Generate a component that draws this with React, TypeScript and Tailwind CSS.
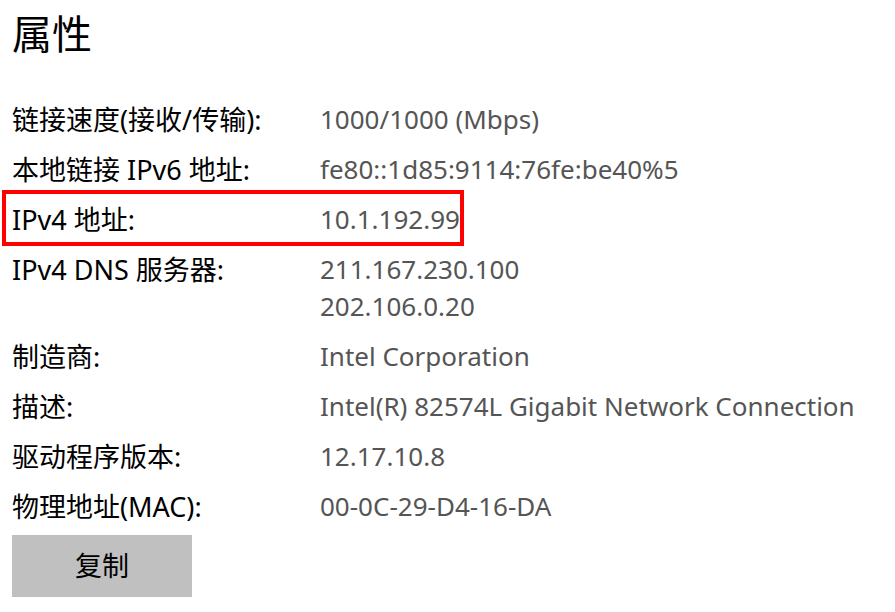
import React from 'react';

interface Prop {
  label: string;
  values: string[];
  marked?: boolean;
}

const props: Prop[] = [
  { label: '链接速度(接收/传输):', values: ['1000/1000 (Mbps)'] },
  { label: '本地链接 IPv6 地址:', values: ['fe80::1d85:9114:76fe:be40%5'] },
  { label: 'IPv4 地址:', values: ['10.1.192.99'], marked: true },
  { label: 'IPv4 DNS 服务器:', values: ['211.167.230.100', '202.106.0.20'] },
  { label: '制造商:', values: ['Intel Corporation'] },
  { label: '描述:', values: ['Intel(R) 82574L Gigabit Network Connection'] },
  { label: '驱动程序版本:', values: ['12.17.10.8'] },
  { label: '物理地址(MAC):', values: ['00-0C-29-D4-16-DA'] },
];

const font = "font-['Noto_Sans','Noto_Sans_CJK_SC',sans-serif]";

export default function App() {
  return (
    <div className={`w-[895px] h-[612px] bg-white overflow-hidden pl-3 ${font}`}>
      <h1 className="text-[40px] leading-[50px] text-black pt-[9px] font-normal">属性</h1>

      <div className="mt-[42px] flex flex-col gap-[13px]">
        {props.map((p) => (
          <div key={p.label} className="relative flex leading-[37px]">
            {p.marked && (
              <div className="absolute -left-[10px] -top-[11px] w-[462px] h-[56px] border-[4px] border-[#ff0000]" />
            )}
            <div className="w-[308px] shrink-0 text-[27px] text-black">{p.label}</div>
            <div className="flex flex-col text-[26px] text-[#555555]">
              {p.values.map((v) => (
                <span key={v}>{v}</span>
              ))}
            </div>
          </div>
        ))}
      </div>

      <button className="mt-[10px] w-[180px] h-[62px] bg-[#c0c0c0] text-[27px] text-black">
        复制
      </button>
    </div>
  );
}
